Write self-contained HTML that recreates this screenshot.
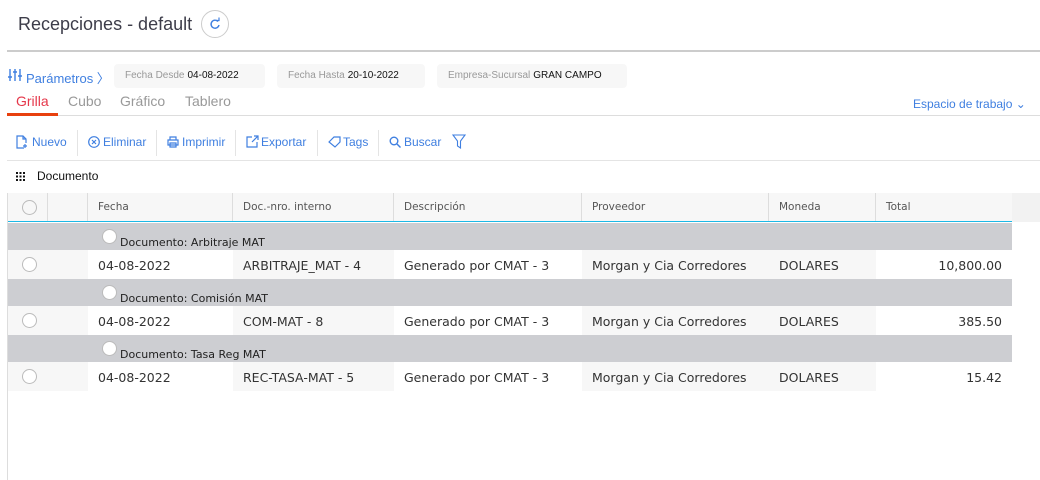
<!DOCTYPE html>
<html><head><meta charset="utf-8"><style>
*{box-sizing:border-box;margin:0;padding:0}
body{width:1040px;height:480px;overflow:hidden;background:#fff;font-family:"Liberation Sans",sans-serif;position:relative}
.a{position:absolute}
.blue{color:#3f7fe0}
.chip{position:absolute;top:64px;height:24px;background:#f7f7f7;border-radius:4px;font-size:10px;line-height:24px;padding-left:11px;color:#999}
.chip b{font-weight:normal;color:#111;margin-left:3px}
.tb{position:absolute;top:134px;font-size:12px;color:#3f7fe0;line-height:16px}
.sep{position:absolute;top:130px;width:1px;height:26px;background:#e4e4e4}
.th{position:absolute;top:193px;height:29px;font-family:"DejaVu Sans",sans-serif;font-size:10.5px;color:#555;line-height:29px;padding-left:10px;border-right:1px solid #ddd;background:#f7f7f7}
.cell{position:absolute;height:29px;font-family:"DejaVu Sans",sans-serif;font-size:12.5px;color:#333;line-height:29px;padding-left:10px}
.g{position:absolute;left:8px;width:1004px;height:27px;background:#cdced2;font-family:"DejaVu Sans",sans-serif;font-size:11px;color:#222}
.rad{position:absolute;width:15px;height:15px;border:1px solid #bbb;border-radius:50%;background:#fff}
</style></head><body>
<div class="a" style="left:18px;top:14px;font-size:18px;color:#3d3d4a">Recepciones - default</div>
<div class="a" style="left:201px;top:10px;width:28px;height:28px;border:1px solid #ccc;border-radius:50%"></div>
<svg class="a" style="left:208px;top:17px" width="14" height="14" viewBox="0 0 14 14"><path d="M10 4.5A4 4 0 1 0 11 8" fill="none" stroke="#3f7fe0" stroke-width="1.4"/><path d="M8 3.5h3v-3" fill="none" stroke="#3f7fe0" stroke-width="1.2"/></svg>
<div class="a" style="left:7px;top:50px;width:1033px;height:2px;background:#ccc"></div>
<svg class="a" style="left:8px;top:68px" width="14" height="14" viewBox="0 0 14 14" stroke="#3f7fe0" stroke-width="1.4"><path d="M2 1v12M7 1v12M12 1v12"/><path d="M0 9h4M5 4h4M10 8h4"/></svg>
<div class="a blue" style="left:26px;top:68px;font-size:13px">Parámetros 〉</div>
<div class="chip" style="left:114px;width:151px">Fecha Desde<b>04-08-2022</b></div>
<div class="chip" style="left:277px;width:148px">Fecha Hasta<b>20-10-2022</b></div>
<div class="chip" style="left:437px;width:190px">Empresa-Sucursal<b>GRAN CAMPO</b></div>
<div class="a" style="left:16px;top:93px;font-size:14px;color:#e5374a">Grilla</div>
<div class="a" style="left:68px;top:93px;font-size:14px;color:#999">Cubo</div>
<div class="a" style="left:120px;top:93px;font-size:14px;color:#999">Gráfico</div>
<div class="a" style="left:185px;top:93px;font-size:14px;color:#999">Tablero</div>
<div class="a" style="left:7px;top:115px;width:1033px;height:1px;background:#ddd"></div>
<div class="a" style="left:7px;top:113px;width:51px;height:3px;background:#e8400e"></div>
<div class="a blue" style="left:913px;top:97px;font-size:12px">Espacio de trabajo &#8964;</div>
<svg class="a" style="left:16px;top:135px" width="13" height="14" viewBox="0 0 13 14" fill="none" stroke="#3f7fe0" stroke-width="1.2"><path d="M8 13H1V1h6l3 3v4M7 1v3h3M9 9v4M7 11h4"/></svg>
<div class="tb" style="left:32px">Nuevo</div><div class="sep" style="left:77px"></div>
<svg class="a" style="left:88px;top:136px" width="12" height="12" viewBox="0 0 12 12" fill="none" stroke="#3f7fe0" stroke-width="1.2"><circle cx="6" cy="6" r="5.3"/><path d="M4 4l4 4M8 4l-4 4"/></svg>
<div class="tb" style="left:103px">Eliminar</div><div class="sep" style="left:156px"></div>
<svg class="a" style="left:167px;top:136px" width="12" height="12" viewBox="0 0 12 12" fill="none" stroke="#3f7fe0" stroke-width="1.2"><path d="M3 4V1h6v3M1 4h10v5H1zM3 7h6v4H3z"/></svg>
<div class="tb" style="left:182px">Imprimir</div><div class="sep" style="left:235px"></div>
<svg class="a" style="left:246px;top:135px" width="13" height="13" viewBox="0 0 13 13" fill="none" stroke="#3f7fe0" stroke-width="1.2"><path d="M6 2H1v10h10V7M8 1h4v4M12 1L6 7"/></svg>
<div class="tb" style="left:261px">Exportar</div><div class="sep" style="left:317px"></div>
<svg class="a" style="left:328px;top:136px" width="13" height="12" viewBox="0 0 13 12" fill="none" stroke="#3f7fe0" stroke-width="1.2"><path d="M1 6L6 1h6v5L7 11z"/></svg>
<div class="tb" style="left:343px">Tags</div><div class="sep" style="left:378px"></div>
<svg class="a" style="left:389px;top:136px" width="12" height="12" viewBox="0 0 12 12" fill="none" stroke="#3f7fe0" stroke-width="1.4"><circle cx="5" cy="5" r="3.8"/><path d="M8 8l3.5 3.5"/></svg>
<div class="tb" style="left:404px">Buscar</div>
<svg class="a" style="left:452px;top:134px" width="14" height="15" viewBox="0 0 14 15" fill="none" stroke="#3f7fe0" stroke-width="1.1"><path d="M1 1h12L8.5 7v7L5.5 12V7z"/></svg>
<div class="a" style="left:7px;top:160px;width:1033px;height:1px;background:#e4e4e4"></div>
<svg class="a" style="left:16px;top:172px" width="9" height="9" viewBox="0 0 9 9" fill="#111"><rect x="0" y="0" width="2" height="2"/><rect x="3.5" y="0" width="2" height="2"/><rect x="7" y="0" width="2" height="2"/><rect x="0" y="3.5" width="2" height="2"/><rect x="3.5" y="3.5" width="2" height="2"/><rect x="7" y="3.5" width="2" height="2"/><rect x="0" y="7" width="2" height="2"/><rect x="3.5" y="7" width="2" height="2"/><rect x="7" y="7" width="2" height="2"/></svg>
<div class="a" style="left:37px;top:169px;font-size:12px;color:#111">Documento</div>
<div class="a" style="left:7px;top:193px;width:1px;height:287px;background:#ddd"></div>
<div class="a" style="left:8px;top:193px;width:1032px;height:29px;background:#f2f2f2"></div>
<div class="th" style="left:8px;width:40px"></div>
<div class="rad" style="left:22px;top:200px;background:#f7f7f7"></div>
<div class="th" style="left:48px;width:40px"></div>
<div class="th" style="left:88px;width:145px">Fecha</div>
<div class="th" style="left:233px;width:161px">Doc.-nro. interno</div>
<div class="th" style="left:394px;width:188px">Descripción</div>
<div class="th" style="left:582px;width:187px">Proveedor</div>
<div class="th" style="left:769px;width:107px">Moneda</div>
<div class="th" style="left:876px;width:136px;border-right:0">Total</div>
<div class="a" style="left:8px;top:221px;width:1004px;height:1px;background:#1cb8e6"></div>

<div class="g" style="top:223px"><div class="rad" style="left:94px;top:6px"></div><div class="a" style="left:112px;top:13px">Documento: Arbitraje MAT</div></div>
<div class="a" style="left:8px;top:250px;width:1004px;height:29px">
<div class="a" style="left:0;width:80px;height:29px;background:#f7f7f7"></div><div class="rad" style="left:14px;top:7px"></div>
<div class="a" style="left:225px;width:161px;height:29px;background:#f7f7f7"></div>
<div class="a" style="left:574px;width:294px;height:29px;background:#f7f7f7"></div>
</div>
<div class="cell" style="left:88px;top:251px">04-08-2022</div><div class="cell" style="left:233px;top:251px">ARBITRAJE_MAT - 4</div><div class="cell" style="left:394px;top:251px">Generado por CMAT - 3</div><div class="cell" style="left:582px;top:251px">Morgan y Cia Corredores</div><div class="cell" style="left:769px;top:251px">DOLARES</div><div class="cell" style="left:876px;top:251px;width:126px;text-align:right">10,800.00</div>

<div class="g" style="top:279px"><div class="rad" style="left:94px;top:6px"></div><div class="a" style="left:112px;top:13px">Documento: Comisión MAT</div></div>
<div class="a" style="left:8px;top:306px;width:1004px;height:29px">
<div class="a" style="left:0;width:80px;height:29px;background:#f7f7f7"></div><div class="rad" style="left:14px;top:7px"></div>
<div class="a" style="left:225px;width:161px;height:29px;background:#f7f7f7"></div>
<div class="a" style="left:574px;width:294px;height:29px;background:#f7f7f7"></div>
</div>
<div class="cell" style="left:88px;top:307px">04-08-2022</div><div class="cell" style="left:233px;top:307px">COM-MAT - 8</div><div class="cell" style="left:394px;top:307px">Generado por CMAT - 3</div><div class="cell" style="left:582px;top:307px">Morgan y Cia Corredores</div><div class="cell" style="left:769px;top:307px">DOLARES</div><div class="cell" style="left:876px;top:307px;width:126px;text-align:right">385.50</div>

<div class="g" style="top:335px"><div class="rad" style="left:94px;top:6px"></div><div class="a" style="left:112px;top:13px">Documento: Tasa Reg MAT</div></div>
<div class="a" style="left:8px;top:362px;width:1004px;height:29px">
<div class="a" style="left:0;width:80px;height:29px;background:#f7f7f7"></div><div class="rad" style="left:14px;top:7px"></div>
<div class="a" style="left:225px;width:161px;height:29px;background:#f7f7f7"></div>
<div class="a" style="left:574px;width:294px;height:29px;background:#f7f7f7"></div>
</div>
<div class="cell" style="left:88px;top:363px">04-08-2022</div><div class="cell" style="left:233px;top:363px">REC-TASA-MAT - 5</div><div class="cell" style="left:394px;top:363px">Generado por CMAT - 3</div><div class="cell" style="left:582px;top:363px">Morgan y Cia Corredores</div><div class="cell" style="left:769px;top:363px">DOLARES</div><div class="cell" style="left:876px;top:363px;width:126px;text-align:right">15.42</div>
</body></html>
